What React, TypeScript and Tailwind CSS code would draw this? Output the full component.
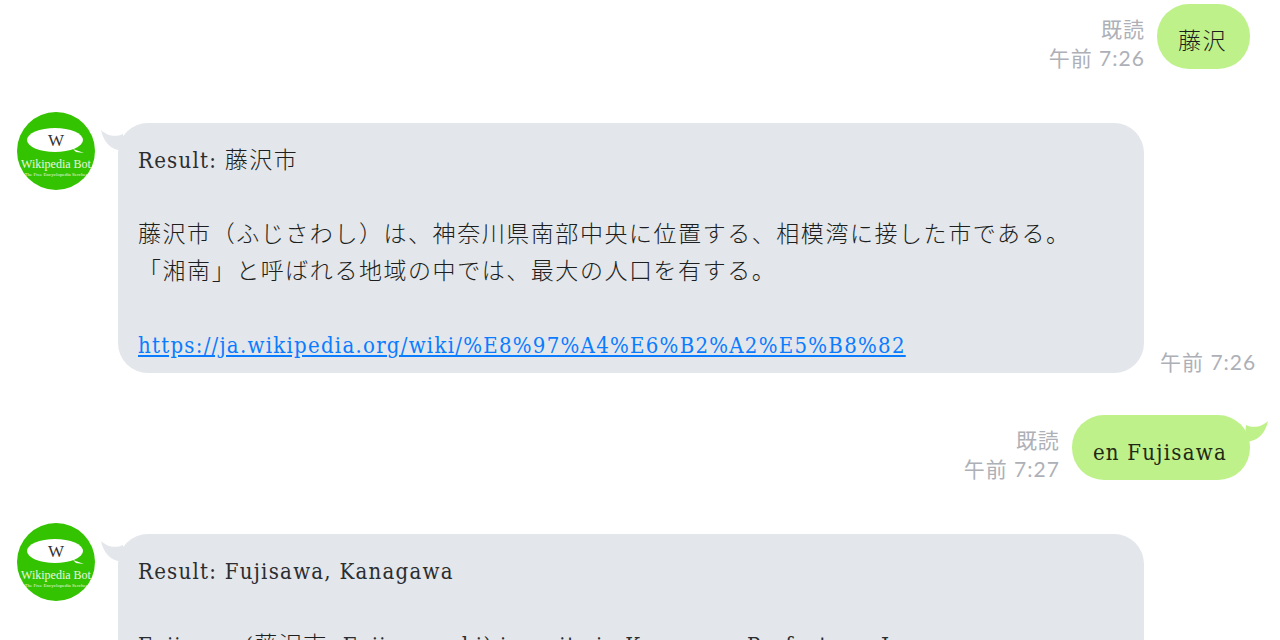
function Ja({ children }: { children: React.ReactNode }) {
  return <span className="text-[23px] leading-none tracking-[1.55px] text-[#1c1e20] font-['Noto_Sans_CJK_JP',sans-serif] font-light">{children}</span>;
}

function Avatar() {
  return (
    <svg className="h-[78px] w-[78px] shrink-0 tracking-normal font-stretch-normal" viewBox="0 0 78 78">
      <circle cx="39" cy="39" r="39" fill="#34c300" />
      <ellipse cx="38" cy="28" rx="28" ry="12" fill="#ffffff" />
      <path d="M56 37 L67 41 L59 40 Z" fill="#ffffff" />
      <text x="39" y="34" textAnchor="middle" fontSize="17" fill="#333333" fontFamily="Liberation Serif, serif">W</text>
      <text x="39" y="56" textAnchor="middle" fontSize="12" fill="#e8f8e0" fontFamily="Liberation Serif, serif">Wikipedia Bot</text>
      <text x="39" y="64" textAnchor="middle" fontSize="5" fill="#e8f8e0" fontFamily="Liberation Serif, serif">The Free Encyclopedia Serches</text>
    </svg>
  );
}

function Meta({ read, time }: { read?: boolean; time: string }) {
  return (
    <div className="mb-[-3px] flex flex-col items-end self-end text-[21px] leading-[29px] tracking-[1px] text-[#aeb0b8] font-['Lato','Noto_Sans_CJK_JP',sans-serif]">
      {read && <span>既読</span>}
      <span>{time}</span>
    </div>
  );
}

function LeftTail() {
  return (
    <svg className="absolute left-[-17px] top-[7px] h-[24px] w-[24px]" viewBox="0 0 24 24">
      <path d="M0 0 C5 5 14 8 22 4 L24 22 L17 20 C8 18 2 10 0 0 Z" fill="#e3e6ea" />
    </svg>
  );
}

function RightTail() {
  return (
    <svg className="absolute right-[-18px] top-[6px] h-[24px] w-[24px]" viewBox="0 0 24 24">
      <path d="M24 0 C19 5 10 8 2 4 L0 22 L7 20 C16 18 22 10 24 0 Z" fill="#bff18a" />
    </svg>
  );
}

function SentRow({ children, time, tail, className }: { children: React.ReactNode; time: string; tail?: boolean; className?: string }) {
  return (
    <div className={`flex justify-end gap-[12px] pr-[30px] ${className ?? ""}`}>
      <Meta read time={time} />
      <div className="relative rounded-[32px] bg-[#bff18a] pb-[9px] pl-[21px] pr-[23px] pt-[19px] text-[#1f2a16]">
        {tail && <RightTail />}
        {children}
      </div>
    </div>
  );
}

function BotRow({ children, time, className }: { children: React.ReactNode; time?: string; className?: string }) {
  return (
    <div className={`flex items-start pl-[17px] ${className ?? ""}`}>
      <Avatar />
      <div className="relative ml-[23px] mt-[11px] w-[1026px] rounded-[30px] bg-[#e3e6ea] pb-[9px] pl-[20px] pr-[20px] pt-[19px] text-[#2b2d30]">
        <LeftTail />
        {children}
      </div>
      {time && (
        <div className="ml-[16px] self-end">
          <Meta time={time} />
        </div>
      )}
    </div>
  );
}

export default function App() {
  return (
    <div className="h-[640px] overflow-hidden bg-white pt-[4px] text-[22px] leading-[37px] tracking-[1.25px] font-stretch-condensed font-['DejaVu_Serif',serif]">
      <SentRow time="午前 7:26"><Ja>藤沢</Ja></SentRow>
      <BotRow time="午前 7:26" className="mt-[43px]">
        <p>Result: <Ja>藤沢市</Ja></p>
        <p className="h-[37px]" />
        <p><Ja>藤沢市（ふじさわし）は、神奈川県南部中央に位置する、相模湾に接した市である。</Ja></p>
        <p><Ja>「湘南」と呼ばれる地域の中では、最大の人口を有する。</Ja></p>
        <p className="h-[37px]" />
        <a className="text-[#0a7cff] underline" href="#">https://ja.wikipedia.org/wiki/%E8%97%A4%E6%B2%A2%E5%B8%82</a>
      </BotRow>
      <SentRow time="午前 7:27" tail className="mt-[42px]">en Fujisawa</SentRow>
      <BotRow className="mt-[43px]">
        <p>Result: Fujisawa, Kanagawa</p>
        <p className="h-[37px]" />
        <p>Fujisawa (<Ja>藤沢市</Ja>, Fujisawa-shi) is a city in Kanagawa Prefecture, Japan.</p>
      </BotRow>
    </div>
  );
}
